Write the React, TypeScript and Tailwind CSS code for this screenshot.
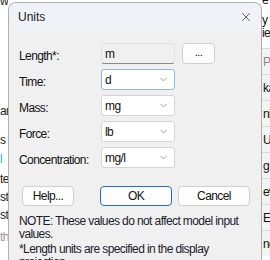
import { ChevronDown, X } from "lucide-react";

const units = [
  { label: "Time:", value: "d", focused: true },
  { label: "Mass:", value: "mg" },
  { label: "Force:", value: "lb" },
  { label: "Concentration:", value: "mg/l" },
];

const leftBits = [
  { top: "mt-[96px]", text: "ar", cls: "text-[#222]" },
  { top: "mt-[15px]", text: "s", cls: "text-[#222]" },
  { top: "mt-[5px]", text: "l", cls: "text-[#3aa7b5]" },
  { top: "mt-[6px]", text: "te", cls: "text-[#222]" },
  { top: "mt-[4px]", text: "sti", cls: "text-[#222]" },
  { top: "mt-[4px]", text: "sti", cls: "text-[#222]" },
  { top: "mt-[8px]", text: "th", cls: "text-[#999]" },
];

const rightRows = ["P", "ka", "nit", "U", "g", "ev", "El", "ng"];

function Dropdown({ value, focused }: { value: string; focused?: boolean }) {
  return (
    <div
      className={`flex items-center justify-between w-[74px] h-[21px] bg-white rounded-[3px] border pl-[3px] pr-[5px] ${
        focused ? "border-[#8fb8e3]" : "border-[#d4d4d4]"
      }`}
    >
      <span>{value}</span>
      <ChevronDown className="w-[11px] h-[11px] text-[#6a6a6a]" strokeWidth={1.4} />
    </div>
  );
}

export default function App() {
  return (
    <div
      className="relative w-[270px] h-[260px] overflow-hidden bg-white text-[12px] leading-[14px] tracking-[-0.6px] text-[#111]"
      style={{ fontFamily: '"Liberation Sans", Arial, sans-serif' }}
    >
      {/* Background app */}
      <div className="flex h-full">
        <div className="w-[8px] flex flex-col overflow-hidden whitespace-nowrap">
          <span className="-mt-[6px] text-[#222]">w</span>
          {leftBits.map((b, i) => (
            <span key={i} className={`${b.top} ${b.cls}`}>
              {b.text}
            </span>
          ))}
        </div>
        <div className="flex-1" />
        <div className="w-[8px] flex flex-col overflow-hidden whitespace-nowrap">
          <span className="-mt-[7px]">e</span>
          <span className="mt-[6px]">y</span>
          <span className="-mt-[1px]">ie</span>
          <div className="mt-[8px] flex flex-col bg-[#f3f3f3]">
            {rightRows.map((r, i) => (
              <div
                key={i}
                className={`h-[26px] flex items-center border-t border-[#d9d9d9] pl-[1px] ${
                  i === 0 ? "text-[#888]" : ""
                }`}
              >
                {r}
              </div>
            ))}
          </div>
        </div>
      </div>

      {/* Dialog */}
      <div className="absolute left-[8px] top-[2px] w-[254px] h-[270px] bg-[#f0f0f0] rounded-t-[8px] border-r border-l border-t border-[#b0b0b0] overflow-hidden">
        <div className="h-[28px] bg-[#eff3f8] flex items-center justify-between pl-[9px] pr-[8px]">
          <span className="text-[12px] tracking-normal text-[#1a1a1a]">Units</span>
          <X className="w-[14px] h-[14px] text-[#222]" strokeWidth={1.2} />
        </div>

        <div className="pl-[10px] pt-[12px]">
          <div className="flex flex-col gap-[5px]">
            <div className="flex items-center h-[21px]">
              <span className="w-[82px] pt-[5px]">Length*:</span>
              <div className="w-[74px] h-[21px] bg-[#f0f0f0] border border-[#e2e2e2] border-b-[#8a8a8a] rounded-[3px] flex items-center pl-[3px]">
                m
              </div>
              <div className="ml-[7px] w-[33px] h-[21px] bg-[#fdfdfd] border border-[#d0d0d0] rounded-[4px] flex items-center justify-center text-[11px] pb-[3px]">
                ...
              </div>
            </div>
            {units.map((u) => (
              <div key={u.label} className="flex items-center h-[21px]">
                <span className="w-[82px] pt-[5px]">{u.label}</span>
                <Dropdown value={u.value} focused={u.focused} />
              </div>
            ))}
          </div>

          <div className="flex mt-[18px] ml-[3px]">
            <div className="w-[52px] h-[20px] bg-[#fdfdfd] border border-[#d0d0d0] rounded-[4px] flex items-center justify-center">
              Help...
            </div>
            <div className="ml-[26px] w-[72px] h-[20px] bg-[#fdfdfd] border border-[#1f6fc2] rounded-[4px] flex items-center justify-center">
              OK
            </div>
            <div className="ml-[6px] w-[72px] h-[20px] bg-[#fdfdfd] border border-[#d0d0d0] rounded-[4px] flex items-center justify-center">
              Cancel
            </div>
          </div>

          <div className="mt-[9px] pr-[12px] leading-[13px] text-[#1c1c2c]">
            <p>NOTE: These values do not affect model input values.</p>
            <p className="mt-[2px]">*Length units are specified in the display projection.</p>
          </div>
        </div>
      </div>
    </div>
  );
}
